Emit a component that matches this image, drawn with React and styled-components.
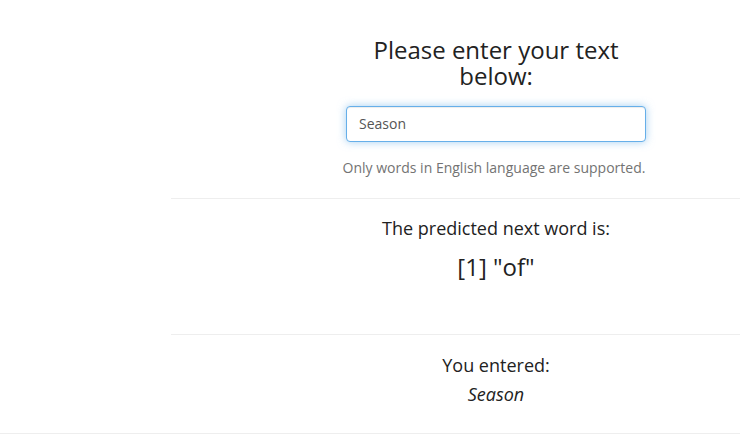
import React from "react";
import styled, { createGlobalStyle } from "styled-components";

const Global = createGlobalStyle`
  html, body { margin: 0; padding: 0; background: #fff; overflow: hidden; }
  body { font-family: "Open Sans", "DejaVu Sans", sans-serif; color: #333; font-size: 14px; line-height: 1.42857; }
`;

const Page = styled.div`
  width: 100%;
  overflow: hidden;
  padding-top: 37px;
`;

const Row = styled.div`
  display: flex;
`;

const Sidebar = styled.div`
  width: 171px;
  flex-shrink: 0;
`;

const Main = styled.div`
  width: 650px;
  flex-shrink: 0;
  text-align: center;
`;

const Column = styled.div`
  width: 300px;
  margin: 0 auto;
`;

const Title = styled.h3`
  font-size: 24px;
  font-weight: 400;
  line-height: 1.1;
  margin: 0 0 16px;
  color: #222;
`;

const TextInput = styled.input`
  display: block;
  box-sizing: border-box;
  width: 300px;
  height: 36px;
  padding: 6px 12px;
  font-family: "Open Sans", "DejaVu Sans", sans-serif;
  font-size: 14px;
  color: #555;
  background: #fff;
  border: 1px solid #66afe9;
  border-radius: 4px;
  outline: 0;
  caret-color: #333;
  box-shadow: inset 0 1px 1px rgba(0,0,0,.075), 0 0 8px rgba(102,175,233,.6);
  text-align: left;
`;

const Help = styled.p`
  margin: 16px -3px 0 -7px;
  font-size: 14px;
  line-height: 20px;
  color: #737373;
  white-space: nowrap;
`;

const Rule = styled.hr`
  border: 0;
  border-top: 1px solid #eee;
  margin: ${(p) => p.$m || "20px 0"};
`;

const Label = styled.div`
  font-size: 18px;
  line-height: 20px;
  color: #222;
`;

const Result = styled.div`
  font-size: 24px;
  line-height: 26px;
  color: #222;
  margin-top: 16px;
`;

const Entered = styled.div`
  font-size: 18px;
  font-style: italic;
  line-height: 22px;
  color: #222;
  margin-top: 8px;
`;

const Section = styled.div`
  padding: ${(p) => p.$pad};
`;

export default function App() {
  return (
    <>
      <Global />
      <Page>
        <Row>
          <Sidebar />
          <Main>
            <Column>
              <Title>Please enter your text below:</Title>
              <TextInput defaultValue="Season" autoFocus />
              <Help>Only words in English language are supported.</Help>
            </Column>
            <Rule $m="20px 0 0" />
            <Section $pad="19px 0 54px">
              <Label>The predicted next word is:</Label>
              <Result>[1] "of"</Result>
            </Section>
            <Rule $m="0" />
            <Section $pad="20px 0 28px">
              <Label>You entered:</Label>
              <Entered>Season</Entered>
            </Section>
          </Main>
        </Row>
        <Rule $m="0" />
      </Page>
    </>
  );
}
